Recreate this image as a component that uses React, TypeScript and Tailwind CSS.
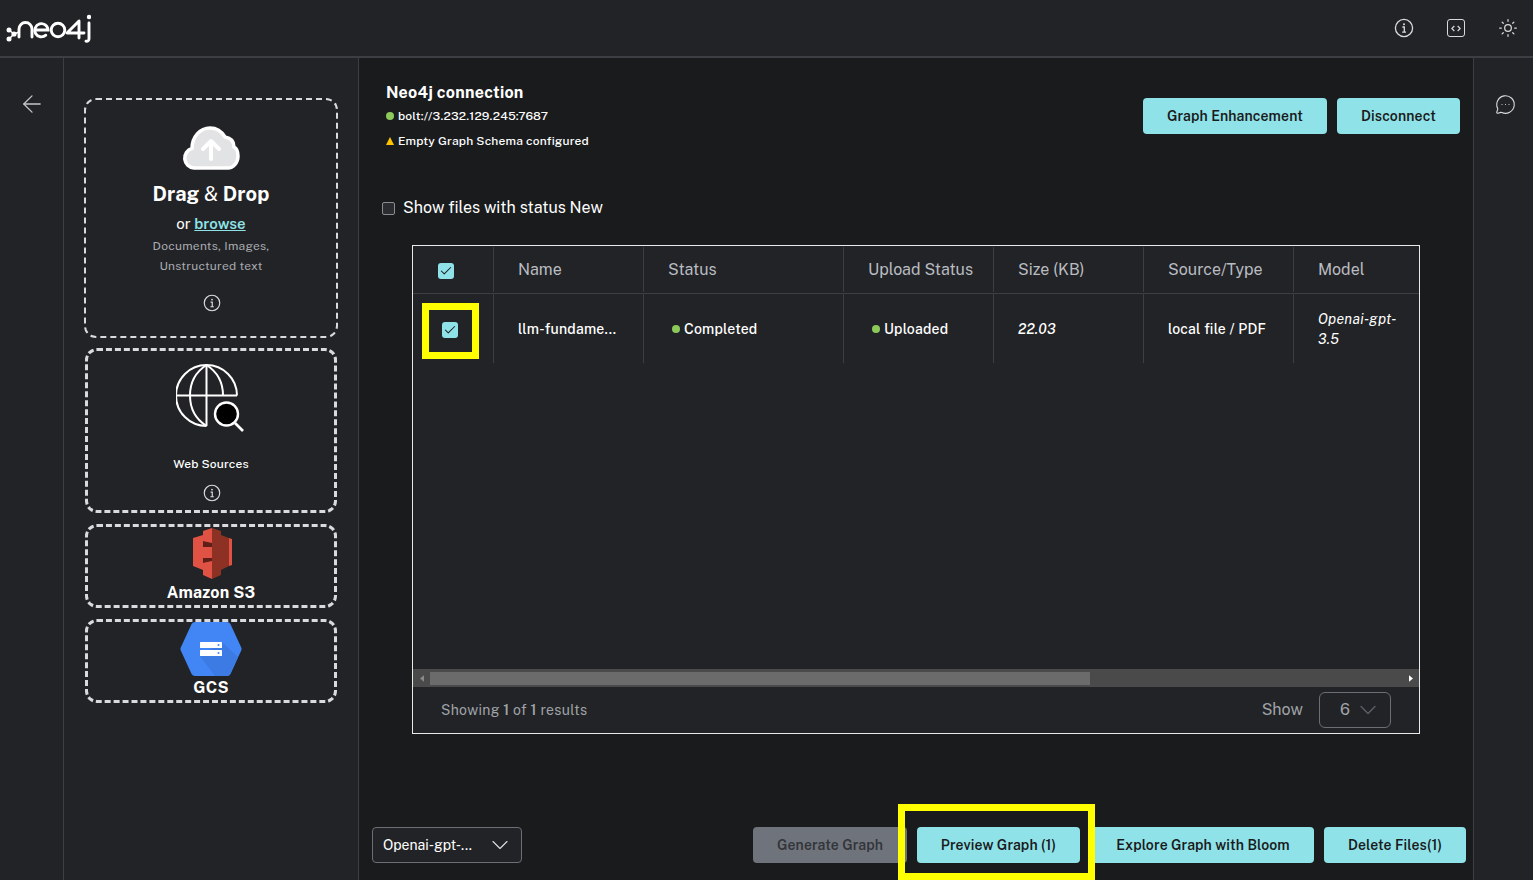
import React from 'react';
import { ArrowLeft, Check, ChevronDown, MessageCircleMore, Sun } from 'lucide-react';

const columns = [
  { name: 'Name', width: 'w-[150px]' },
  { name: 'Status', width: 'w-[200px]' },
  { name: 'Upload Status', width: 'w-[150px]' },
  { name: 'Size (KB)', width: 'w-[150px]' },
  { name: 'Source/Type', width: 'w-[150px]' },
];

const InfoIcon = ({ className }: { className?: string }) => (
  <svg viewBox="0 0 20 20" fill="none" stroke="currentColor" className={className}>
    <circle cx="10" cy="10" r="8.6" strokeWidth="1.3" />
    <circle cx="10" cy="6.2" r="1" fill="currentColor" stroke="none" />
    <path d="M8.4 9h1.9v5M8.2 14.2h3.8" strokeWidth="1.3" />
  </svg>
);

const Neo4jLogo = () => (
  <svg viewBox="0 0 90 30" width="90" height="30" fill="none" stroke="white" strokeWidth="2.9" strokeLinecap="round">
    <g transform="translate(0,-14)">
      <circle cx="8" cy="30" r="2.5" fill="white" stroke="none" />
      <circle cx="8" cy="39" r="2.5" fill="white" stroke="none" />
      <circle cx="13" cy="34" r="2.6" fill="white" stroke="none" />
      <path d="M8 30l5 4-5 5M13 34l5-2" strokeWidth="1.5" />
      <path d="M18 37V29a6.5 6.5 0 0 1 13 0v8" />
      <path d="M34 30h13a6.6 6.6 0 1 0-2.2 5.2" />
      <circle cx="57" cy="30" r="6.8" />
      <path d="M78 38V21L66 33h17" strokeLinejoin="round" />
      <path d="M88 23v16a2.4 2.4 0 0 1-3 2.2" />
      <circle cx="88" cy="17" r="2.2" fill="white" stroke="none" />
    </g>
  </svg>
);

const CloudIcon = () => (
  <svg viewBox="0 0 58 46" width="58" height="46">
    <path
      d="M12 43a10 10 0 0 1-2-19.6C10 12 18 3 28 3c7 0 12 4 15 9 6 1 9 5 9 10 4 2 4 6 4 9 0 7-5 12-10 12z"
      fill="#e2e3e5"
      stroke="white"
      strokeWidth="3.5"
      strokeLinejoin="round"
    />
    <path d="M29 34V17M21 24l8-8 8 8" fill="none" stroke="white" strokeWidth="4" strokeLinecap="round" strokeLinejoin="round" />
  </svg>
);

const WebIcon = () => (
  <svg viewBox="0 0 68 70" width="68" height="70" fill="none" stroke="white" strokeWidth="2">
    <path d="M30.5 62A30.5 30.5 0 1 1 61 31.5" />
    <path d="M30.5 1C18 9 14 21 14 31.5S18 54 30.5 62M30.5 1C43 9 47 21 47 31.5" />
    <path d="M30.5 1v61M1 31.5h60" />
    <circle cx="50.5" cy="50" r="11.5" fill="black" strokeWidth="2.4" />
    <path d="M59 59l8 8" strokeWidth="2.6" />
  </svg>
);

const S3Icon = () => (
  <svg viewBox="0 0 39 51" width="39" height="51">
    {/* dark body behind the column */}
    <polygon points="10,12 28,12 28,38 10,38" fill="#8c3123" />
    <polygon points="10,13 19,15 19,19 10,19" fill="#5e1f18" />
    <polygon points="10,30 19,30 19,33 10,35" fill="#5e1f18" />
    {/* wings */}
    <polygon points="0,10 10,7 10,42 0,38" fill="#e05243" />
    <polygon points="28,7 36,10 36,38 28,42" fill="#8c3123" />
    <polygon points="36,10 39,11 39,37 36,38" fill="#e05243" />
    {/* top, middle and bottom of the column */}
    <polygon points="10,3 19,0 19,15 10,13" fill="#e05243" />
    <polygon points="19,0 28,3 28,13 19,15" fill="#8c3123" />
    <polygon points="10,19 19,19 19,30 10,30" fill="#e05243" />
    <polygon points="10,35 19,33 19,51 10,47" fill="#e05243" />
    <polygon points="19,33 28,35 28,47 19,51" fill="#8c3123" />
  </svg>
);

const GcsIcon = () => (
  <svg viewBox="0 0 62 56" width="62" height="56">
    <path d="M15 1h32a4 4 0 0 1 3.4 2L61 26a4 4 0 0 1 0 4L50.4 53a4 4 0 0 1-3.4 2H15a4 4 0 0 1-3.4-2L1 30a4 4 0 0 1 0-4L11.6 3A4 4 0 0 1 15 1z" fill="#4285f4" />
    <path d="M42 21L58 36 50.4 53a4 4 0 0 1-3.4 2H35L20 35z" fill="#3d7be4" />
    <rect x="20" y="21" width="22" height="6" rx="0.5" fill="white" />
    <rect x="20" y="29" width="22" height="6" rx="0.5" fill="white" />
    <circle cx="38.5" cy="24" r="1" fill="#4285f4" />
    <circle cx="38.5" cy="32" r="1" fill="#4285f4" />
  </svg>
);

const Checked = () => (
  <span className="w-4 h-4 rounded-[3px] bg-[#8fe3e8] flex items-center justify-center">
    <Check className="w-[14px] h-[14px] text-[#1a1b1d]" strokeWidth={1.75} />
  </span>
);

const Button = ({ label, className }: { label: string; className: string }) => (
  <button className={`h-9 rounded-[4px] bg-[#8fe3e8] text-[#1a1b1d] text-sm font-semibold tracking-[0.1px] ${className}`}>{label}</button>
);

const App = () => {
  return (
    <div className="h-screen flex flex-col overflow-hidden bg-[#222326] text-white font-['Public_Sans','Inter',sans-serif]">
      {/* Top bar */}
      <header className="h-[58px] shrink-0 flex items-center justify-between border-b-2 border-[#3c3e44] pl-[1px]">
        <div className="pt-[1px]">
          <Neo4jLogo />
        </div>
        <div className="flex items-center gap-[33px] pr-[15px] text-[#d9dadc]">
          <InfoIcon className="w-5 h-5" />
          <span className="w-[18px] h-[18px] rounded-[3px] border-[1.5px] border-[#d9dadc] flex items-center justify-center">
            <svg viewBox="0 0 12 8" width="10" height="7" fill="none" stroke="currentColor" strokeWidth="1.4">
              <path d="M4 1L1 4l3 3M8 1l3 3-3 3" />
            </svg>
          </span>
          <Sun className="w-5 h-5" strokeWidth={1.5} />
        </div>
      </header>

      <div className="flex-1 flex min-h-0">
        {/* Back rail */}
        <aside className="w-16 shrink-0 border-r border-[#3c3e44] pt-[32px] flex justify-center">
          <ArrowLeft className="w-7 h-7 text-[#c4c6c9]" strokeWidth={1.1} />
        </aside>

        {/* Sources */}
        <aside className="w-[295px] shrink-0 border-r border-[#3c3e44] pt-[40px] flex flex-col items-center">
          <div className="w-[254px] h-[240px] rounded-xl border-2 border-dashed border-[#d9dadd] flex flex-col items-center pt-[25px]">
            <CloudIcon />
            <div className="mt-[9px] text-xl leading-7 font-bold tracking-[0.1px]">
              Drag <span className="font-normal">&amp;</span> Drop
            </div>
            <div className="mt-[6px] text-[15px] leading-5">
              or <a className="text-[#8fe3e8] underline font-semibold">browse</a>
            </div>
            <div className="mt-[2px] text-xs leading-5 tracking-[0.25px] text-[#a8abb0] text-center">
              Documents, Images,
              <br />
              Unstructured text
            </div>
            <InfoIcon className="w-[18px] h-[18px] mt-[18px] ml-[2px] text-[#d9dadc]" />
          </div>
          <div className="w-[252px] h-[165px] mt-[10px] rounded-xl border-[3px] border-dashed border-[#d9dadd] flex flex-col items-center pt-[13px]">
            <div className="pr-[3px]">
              <WebIcon />
            </div>
            <div className="mt-[20px] text-xs leading-5 font-medium tracking-[0.15px]">Web Sources</div>
            <InfoIcon className="w-[18px] h-[18px] mt-[10px] ml-[2px] text-[#d9dadc]" />
          </div>
          <div className="w-[252px] h-[84px] mt-[11px] rounded-xl border-[3px] border-dashed border-[#d9dadd] flex flex-col items-center pt-[1px]">
            <div className="pl-[2px] h-[51px]">
              <S3Icon />
            </div>
            <div className="text-base leading-5 font-bold tracking-[0.2px] mt-[4px]">Amazon S3</div>
          </div>
          <div className="w-[252px] h-[84px] mt-[11px] rounded-xl border-[3px] border-dashed border-[#d9dadd] flex flex-col items-center">
            <div className="-mt-[1px] h-[57px]">
              <GcsIcon />
            </div>
            <div className="text-base leading-5 font-bold tracking-[0.2px]">GCS</div>
          </div>
        </aside>

        {/* Main content */}
        <main className="flex-1 min-w-0 flex flex-col bg-[#1a1b1d]">
          <div className="flex justify-between pl-[27px] pr-[13px] pt-[25px]">
            <div>
              <h2 className="text-base leading-5 font-bold tracking-[0.25px]">Neo4j connection</h2>
              <div className="mt-[3px] flex items-center gap-1 text-xs leading-[20px] font-medium tracking-[0.15px]">
                <span className="w-2 h-2 rounded-full bg-[#8cc85a]" />
                bolt://3.232.129.245:7687
              </div>
              <div className="mt-[5px] flex items-center gap-1 text-xs leading-[20px] font-medium tracking-[0.2px]">
                <svg viewBox="0 0 8 8" width="8" height="8">
                  <polygon points="4,0 8,8 0,8" fill="#ffc400" />
                </svg>
                Empty Graph Schema configured
              </div>
            </div>
            <div className="flex gap-[10px] mt-[15px]">
              <Button label="Graph Enhancement" className="w-[184px]" />
              <Button label="Disconnect" className="w-[123px]" />
            </div>
          </div>

          <label className="ml-[23px] mt-[45px] flex items-center gap-2 text-base leading-6">
            <span className="w-[13px] h-[13px] rounded-[2px] border border-[#8a8c90] bg-[#2b2c2f]" />
            Show files with status New
          </label>

          {/* Files table */}
          <section className="ml-[53px] mt-[25px] w-[1008px] h-[489px] border border-[#e8e9ea] bg-[#222326] flex flex-col">
            <div className="flex h-[48px] border-b border-[#3c3e44] text-base text-[#b9bcc1]">
              <div className="w-[80px] shrink-0 flex items-center pl-[25px] pt-[3px] pb-[1px]">
                <Checked />
              </div>
              {columns.map((col) => (
                <div key={col.name} className={`${col.width} shrink-0 flex items-center pl-[24px] border-l border-[#3c3e44] my-[1px]`}>
                  {col.name}
                </div>
              ))}
              <div className="flex-1 flex items-center pl-[24px] border-l border-[#3c3e44] my-[1px]">Model</div>
            </div>

            <div className="flex h-[70px] text-sm font-medium tracking-[0.2px] border-b border-transparent">
              <div className="w-[80px] shrink-0 flex items-center pl-[29px] pt-[2px] relative">
                <Checked />
                <span className="absolute left-[9px] top-[9px] w-[57px] h-[56px] border-[7px] border-[#ffff00]" />
              </div>
              <div className="w-[150px] shrink-0 flex items-center pl-[24px] border-l border-[#3c3e44]">llm-fundame...</div>
              <div className="w-[200px] shrink-0 flex items-center gap-1 pl-[28px] border-l border-[#3c3e44]">
                <span className="w-2 h-2 rounded-full bg-[#8cc85a]" />
                Completed
              </div>
              <div className="w-[150px] shrink-0 flex items-center gap-1 pl-[28px] border-l border-[#3c3e44]">
                <span className="w-2 h-2 rounded-full bg-[#8cc85a]" />
                Uploaded
              </div>
              <div className="w-[150px] shrink-0 flex items-center pl-[24px] border-l border-[#3c3e44] italic">22.03</div>
              <div className="w-[150px] shrink-0 flex items-center pl-[24px] border-l border-[#3c3e44]">local file / PDF</div>
              <div className="flex-1 flex items-center pl-[24px] pr-4 border-l border-[#3c3e44] italic font-normal tracking-[0.3px]">Openai-gpt-3.5</div>
            </div>

            <div className="flex-1" />

            {/* Scrollbar */}
            <div className="h-[18px] bg-[#4a4a4a] flex items-center text-[#a3a3a3]">
              <span className="w-[17px] flex justify-center">
                <svg viewBox="0 0 5 8" width="4" height="7"><polygon points="5,0 5,8 0,4" fill="#8a8a8a" /></svg>
              </span>
              <div className="w-[660px] h-[13px] bg-[#6b6b6b]" />
              <div className="flex-1" />
              <span className="w-[17px] flex justify-center">
                <svg viewBox="0 0 5 8" width="4" height="7"><polygon points="0,0 0,8 5,4" fill="white" /></svg>
              </span>
            </div>

            <div className="h-[46px] flex items-center justify-between pl-[28px] pr-[28px] text-[#a0a4a9]">
              <span className="text-sm tracking-[0.3px]">
                Showing <span className="font-semibold">1</span> of <span className="font-semibold">1</span> results
              </span>
              <div className="flex items-center gap-4">
                <span className="text-base">Show</span>
                <div className="w-[72px] h-9 rounded-md border border-[#6b6e75] flex items-center pl-5 gap-1 text-base">
                  6
                  <ChevronDown className="w-7 h-7 text-[#5f6268]" strokeWidth={1.1} />
                </div>
              </div>
            </div>
          </section>

          {/* Actions */}
          <div className="mt-auto mb-[17px] ml-[13px] mr-[7px] flex items-center justify-between">
            <div className="w-[150px] h-9 rounded-[4px] border border-[#6b6e75] bg-[#222326] flex items-center justify-between pl-[10px] pr-[7px] text-sm">
              Openai-gpt-...
              <ChevronDown className="w-7 h-7 text-[#d9dadc]" strokeWidth={1} />
            </div>
            <div className="flex gap-[10px]">
              <button className="w-[154px] h-9 rounded-[4px] bg-[#6f747c] text-[#33353a] text-sm font-semibold tracking-[0.1px]">Generate Graph</button>
              <div className="relative">
                <Button label="Preview Graph (1)" className="w-[163px]" />
                <span className="absolute -left-[19px] -top-[23px] w-[197px] h-[76px] border-[7px] border-[#ffff00]" />
              </div>
              <Button label="Explore Graph with Bloom" className="w-[224px] pl-[2px]" />
              <Button label="Delete Files(1)" className="w-[142px]" />
            </div>
          </div>
        </main>

        {/* Chat rail */}
        <aside className="w-[60px] shrink-0 border-l border-[#3c3e44] pt-[36px] pl-[4px] flex justify-center">
          <MessageCircleMore className="w-[21px] h-[21px] text-[#d9dadc]" strokeWidth={1.3} />
        </aside>
      </div>
    </div>
  );
};

export default App;
